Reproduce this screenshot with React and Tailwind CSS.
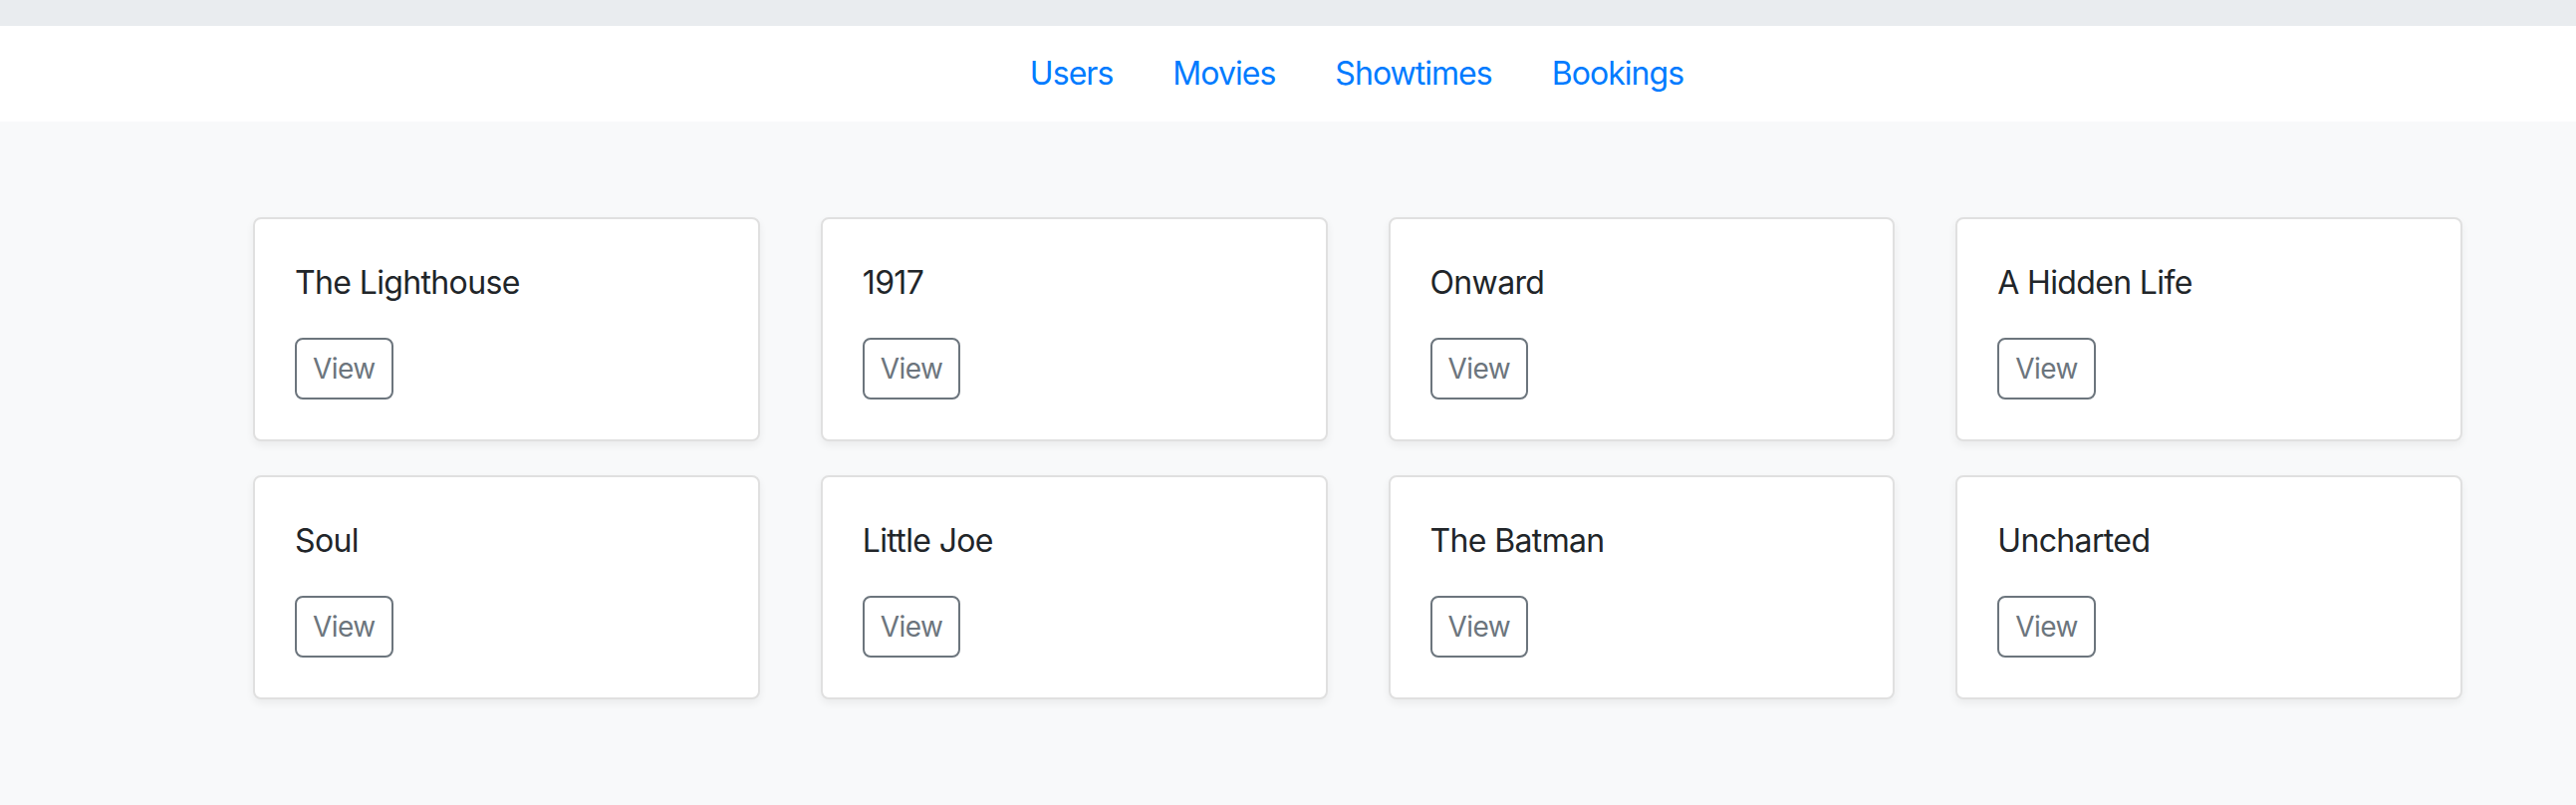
const LINKS = ['Users', 'Movies', 'Showtimes', 'Bookings'];

const MOVIES = [
  'The Lighthouse',
  '1917',
  'Onward',
  'A Hidden Life',
  'Soul',
  'Little Joe',
  'The Batman',
  'Uncharted',
];

function MovieCard({ title }) {
  return (
    <div className="rounded-[8px] border-2 border-[#e0e0e0] bg-white p-[40px] shadow-[0_4px_8px_rgba(0,0,0,0.06)]">
      <h5 className="mb-[31px] text-[32px] leading-[48px] font-normal tracking-[-0.02em] text-[#212529]">{title}</h5>
      <button className="rounded-[8px] border-2 border-[#6c757d] bg-white px-[16px] py-[8px] text-[28px] leading-[42px] tracking-[-0.02em] text-[#6c757d]">
        View
      </button>
    </div>
  );
}

export default function App() {
  return (
    <div className="min-h-[808px] bg-[#f8f9fa] font-['Inter','Liberation_Sans',sans-serif]">
      <div className="h-[26px] bg-[#e9ecef]" />
      <nav className="flex h-[96px] items-center justify-center bg-white pl-[138px]">
        {LINKS.map((l) => (
          <a key={l} href="#" className="px-[30px] text-[32px] leading-[48px] tracking-[-0.03em] text-[#007bff]">
            {l}
          </a>
        ))}
      </nav>
      <main className="pl-[254px] pr-[114px] pt-[96px] pb-[100px]">
        <div className="grid grid-cols-4 gap-x-[61px] gap-y-[34px]">
          {MOVIES.map((m) => (
            <MovieCard key={m} title={m} />
          ))}
        </div>
      </main>
    </div>
  );
}
